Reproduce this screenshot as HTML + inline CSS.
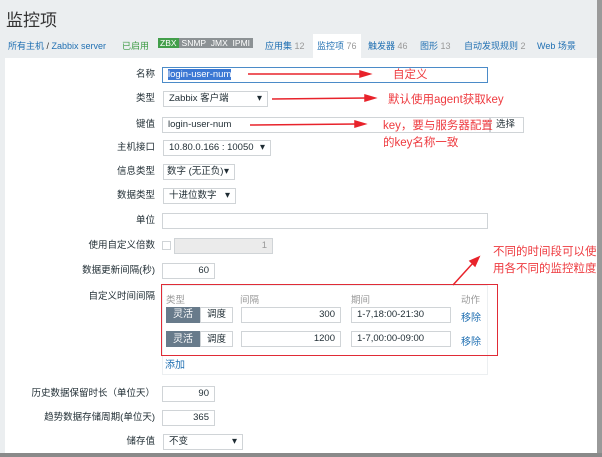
<!DOCTYPE html>
<html><head><meta charset="utf-8"><style>
*{margin:0;padding:0;box-sizing:border-box}
body{width:602px;height:457px;overflow:hidden;background:#ebeef0;font-family:"Liberation Sans","Noto Sans CJK SC",sans-serif;font-size:10px;color:#1f2c33;position:relative}
.a{position:absolute;white-space:nowrap}
.lbl{position:absolute;right:447px;white-space:nowrap;font-size:9.5px;line-height:16px}
.in{position:absolute;border:1px solid #d0d4d7;background:#fff;height:16px;font-size:9.5px;line-height:14px;padding:0 5px;overflow:hidden}
.sel:after{content:"▾";position:absolute;right:5px;top:0;font-size:10px;background:#fff}
.blue{color:#1f6fb2}
.nav{font-size:9px;top:39px}
.red{color:#ee3a3f;font-size:11.5px}
</style></head><body>
<div class="a" style="left:6px;top:6px;font-size:17px;color:#333">监控项</div>
<div class="a blue nav" style="left:8px">所有主机 <span style="color:#333">/</span> Zabbix server</div>
<div class="a nav" style="left:122px;color:#3c9b43">已启用</div>
<div class="a" style="left:158px;top:37px;height:12px;line-height:12px;font-size:8.5px;color:#fff"><span style="background:#429e4a;padding:0 2px">ZBX</span><span style="background:#8c9194;padding:0 3px">SNMP&nbsp; JMX&nbsp; IPMI</span></div>
<div class="a blue nav" style="left:265px">应用集 <span style="color:#999">12</span></div>
<div class="a" style="left:313px;top:34px;width:48px;height:24px;background:#fff"></div>
<div class="a blue nav" style="left:317px">监控项 <span style="color:#999">76</span></div>
<div class="a blue nav" style="left:368px">触发器 <span style="color:#999">46</span></div>
<div class="a blue nav" style="left:420px">图形 <span style="color:#999">13</span></div>
<div class="a blue nav" style="left:464px">自动发现规则 <span style="color:#999">2</span></div>
<div class="a blue nav" style="left:537px">Web 场景</div>
<div class="a" style="left:5px;top:58px;width:592px;height:395px;background:#fff"></div>
<div class="a" style="left:597px;top:0;width:5px;height:457px;background:#9a9a9a"></div>
<div class="a" style="left:0;top:453px;width:602px;height:4px;background:#8a8a8a"></div>

<div class="lbl" style="top:67px">名称</div>
<div class="in" style="left:162px;top:67px;width:326px;border-color:#4b8bc8"><span style="background:#3b78d4;color:#fff">login-user-num</span></div>
<div class="lbl" style="top:91px">类型</div>
<div class="in sel" style="left:163px;top:91px;width:105px">Zabbix 客户端</div>
<div class="lbl" style="top:117px">键值</div>
<div class="in" style="left:162px;top:117px;width:328px">login-user-num</div>
<div class="in" style="left:490px;top:117px;width:34px">选择</div>
<div class="lbl" style="top:140px">主机接口</div>
<div class="in sel" style="left:163px;top:140px;width:108px">10.80.0.166 : 10050</div>
<div class="lbl" style="top:164px">信息类型</div>
<div class="in sel" style="left:163px;top:164px;width:72px;padding:0 3px">数字 (无正负)</div>
<div class="lbl" style="top:188px">数据类型</div>
<div class="in sel" style="left:163px;top:188px;width:73px">十进位数字</div>
<div class="lbl" style="top:213px">单位</div>
<div class="in" style="left:162px;top:213px;width:326px"></div>
<div class="lbl" style="top:238px">使用自定义倍数</div>
<div class="in" style="left:162px;top:241px;width:9px;height:9px;padding:0"></div>
<div class="in" style="left:174px;top:238px;width:99px;background:#ebebeb;text-align:right;color:#999">1</div>
<div class="lbl" style="top:263px">数据更新间隔(秒)</div>
<div class="in" style="left:162px;top:263px;width:53px;text-align:right">60</div>
<div class="lbl" style="top:289px">自定义时间间隔</div>
<div class="a" style="left:162px;top:285px;width:326px;height:90px;border:1px solid #eceff1"></div>
<div class="a" style="left:161px;top:284px;width:337px;height:72px;border:1.5px solid #e02b36"></div>
<div class="a" style="left:166px;top:292px;color:#999;font-size:9.5px">类型</div>
<div class="a" style="left:240px;top:292px;color:#999;font-size:9.5px">间隔</div>
<div class="a" style="left:351px;top:292px;color:#999;font-size:9.5px">期间</div>
<div class="a" style="left:461px;top:292px;color:#999;font-size:9.5px">动作</div>
<div class="a" style="left:166px;top:307px;width:34px;height:16px;background:#687b8b;color:#fff;line-height:16px;text-align:center">灵活</div>
<div class="in" style="left:200px;top:307px;width:33px;text-align:center">调度</div>
<div class="in" style="left:241px;top:307px;width:100px;text-align:right">300</div>
<div class="in" style="left:351px;top:307px;width:100px">1-7,18:00-21:30</div>
<div class="a blue" style="left:461px;top:309px">移除</div>
<div class="a" style="left:166px;top:331px;width:34px;height:16px;background:#687b8b;color:#fff;line-height:18px;text-align:center">灵活</div>
<div class="in" style="left:200px;top:331px;width:33px;text-align:center;line-height:16px">调度</div>
<div class="in" style="left:241px;top:331px;width:100px;text-align:right">1200</div>
<div class="in" style="left:351px;top:331px;width:100px">1-7,00:00-09:00</div>
<div class="a blue" style="left:461px;top:333px">移除</div>
<div class="a blue" style="left:165px;top:356px">添加</div>
<div class="lbl" style="top:386px">历史数据保留时长（单位天）</div>
<div class="in" style="left:162px;top:386px;width:53px;text-align:right">90</div>
<div class="lbl" style="top:410px">趋势数据存储周期(单位天)</div>
<div class="in" style="left:162px;top:410px;width:53px;text-align:right">365</div>
<div class="lbl" style="top:434px">储存值</div>
<div class="in sel" style="left:163px;top:434px;width:80px">不变</div>

<svg class="a" style="left:0;top:0" width="602" height="457">
<g stroke="#e8232b" stroke-width="1.5" fill="#e8232b">
<line x1="248" y1="74" x2="362" y2="74"/><polygon points="370,74 360,71 360,77"/>
<line x1="272" y1="99" x2="367" y2="98"/><polygon points="375,98 365,95 365,101"/>
<line x1="250" y1="125" x2="357" y2="124"/><polygon points="365,124 355,121 355,127"/>
<line x1="453" y1="285" x2="473" y2="263"/><polygon points="479,257 470,261 475,266"/>
</g></svg>
<div class="a red" style="left:393px;top:66px">自定义</div>
<div class="a red" style="left:388px;top:91px">默认使用agent获取key</div>
<div class="a red" style="left:383px;top:117px">key，要与服务器配置</div>
<div class="a red" style="left:383px;top:134px">的key名称一致</div>
<div class="a red" style="left:493px;top:243px">不同的时间段可以使</div>
<div class="a red" style="left:493px;top:260px">用各不同的监控粒度</div>
</body></html>
